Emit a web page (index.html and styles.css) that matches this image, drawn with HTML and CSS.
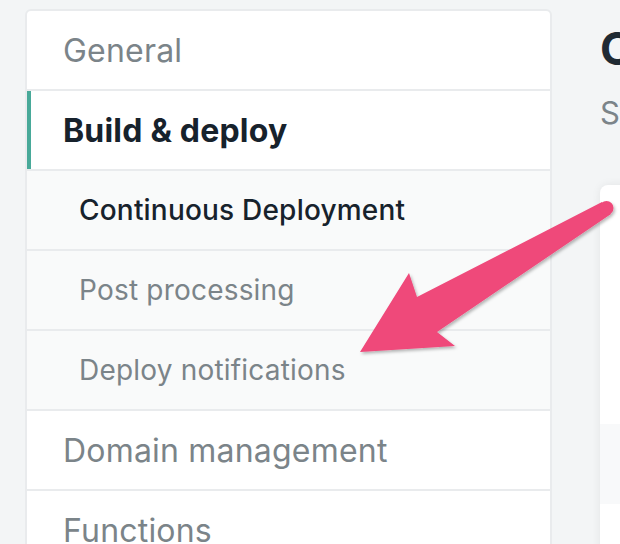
FILE: index.html
```html
<!DOCTYPE html>
<html lang="en">
<head>
    <meta charset="UTF-8">
    <meta name="viewport" content="width=device-width, initial-scale=1.0">
    <title>Site settings</title>
    <link rel="stylesheet" href="styles.css">
</head>
<body>
    <div class="layout">
        <nav class="sidebar">
            <a class="nav-item">General</a>
            <a class="nav-item active">Build &amp; deploy</a>
            <a class="nav-item sub current">Continuous Deployment</a>
            <a class="nav-item sub">Post processing</a>
            <a class="nav-item sub">Deploy notifications</a>
            <a class="nav-item">Domain management</a>
            <a class="nav-item">Functions</a>
        </nav>
        <main class="content">
            <h1 class="title">Continuous Deployment</h1>
            <p class="subtitle">Settings for Continuous Deployment from a Git repository</p>
            <div class="card">
                <div class="card-body"></div>
                <div class="card-row"></div>
                <div class="card-body"></div>
            </div>
        </main>
    </div>

    <!-- annotation arrow -->
    <svg class="arrow" width="620" height="544" viewBox="0 0 620 544">
        <defs>
            <filter id="drop" x="-10%" y="-10%" width="130%" height="130%">
                <feDropShadow dx="1.5" dy="2" stdDeviation="1.5" flood-color="#000" flood-opacity="0.28"/>
            </filter>
        </defs>
        <g filter="url(#drop)" fill="#ef487a">
            <polygon points="602,202 417,297 409,273 360,352 455,346 437,332 611,214"/>
            <circle cx="606.5" cy="208" r="7"/>
        </g>
    </svg>
</body>
</html>
```

FILE: styles.css
```css
html, body {
    margin: 0;
    height: 100%;
    overflow: hidden;
}
body {
    background-color: #f3f5f6;
    font-family: Inter, "Noto Sans", sans-serif;
}
.layout {
    display: flex;
    align-items: flex-start;
    gap: 48px;
    padding: 9px 0 0 25px;
    white-space: nowrap;
}
.sidebar {
    flex: 0 0 527px;
    box-sizing: border-box;
    display: flex;
    flex-direction: column;
    background-color: #fff;
    border: 2px solid #e9ebed;
    border-radius: 6px;
    overflow: hidden;
}
.nav-item {
    display: flex;
    align-items: center;
    height: 78px;
    padding-left: 36px;
    border-bottom: 2px solid #e9ebed;
    font-size: 32px;
    color: #7b8489;
    letter-spacing: 0.2px;
}
.nav-item.active {
    color: #17222c;
    font-weight: 700;
    box-shadow: inset 4px 0 0 #48a999;
}
.nav-item.sub {
    padding-left: 52px;
    background-color: #f9fafa;
    font-size: 28px;
}
.nav-item.current {
    color: #17222c;
    font-weight: 500;
}
.content {
    flex: 1 0 auto;
}
.title {
    margin: 12px 0 0;
    font-size: 45px;
    font-weight: 700;
    color: #1f2a33;
}
.subtitle {
    margin: 18px 0 0;
    font-size: 31px;
    color: #7b8489;
}
.card {
    margin-top: 54px;
    width: 700px;
    background-color: #fff;
    border-radius: 8px;
    box-shadow: 0 0 10px rgba(0, 0, 0, 0.07);
}
.card-body {
    height: 239px;
}
.card-row {
    height: 80px;
    background-color: #f8f9fa;
}
.arrow {
    position: absolute;
    left: 0;
    top: 0;
    pointer-events: none;
}
```
